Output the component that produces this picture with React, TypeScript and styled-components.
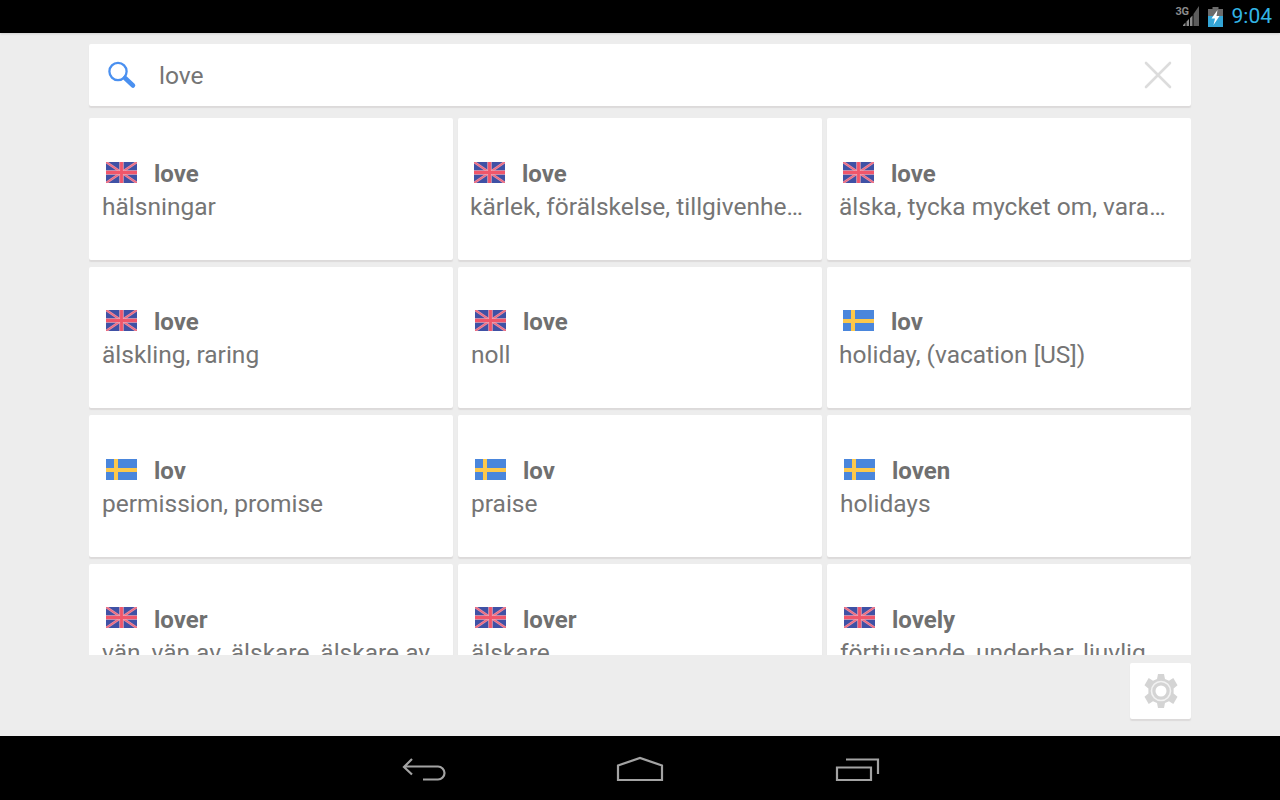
import styled, { createGlobalStyle } from "styled-components";

const GlobalStyle = createGlobalStyle`
  html, body {
    margin: 0;
    padding: 0;
    background: #ededed;
    font-family: Roboto, "Liberation Sans", sans-serif;
  }
`;

const Screen = styled.div`
  width: 1280px;
  height: 800px;
  display: flex;
  flex-direction: column;
  overflow: hidden;
  background: #ededed;
`;

const StatusBar = styled.div`
  height: 33px;
  flex: none;
  background: #000;
  display: flex;
  align-items: center;
  justify-content: flex-end;
  padding-right: 8px;
  box-shadow: 0 1px 2px rgba(0, 0, 0, 0.12);
`;

const SignalWrap = styled.div`
  position: relative;
  width: 24px;
  height: 24px;
  margin-right: 8px;
  margin-top: 1px;
`;

const NetworkLabel = styled.span`
  position: absolute;
  left: 0;
  top: 2px;
  font-size: 11px;
  line-height: 10px;
  font-weight: 700;
  letter-spacing: -0.3px;
  color: #8c8c8c;
`;

const Clock = styled.span`
  font-size: 21px;
  line-height: 33px;
  color: #33b5e5;
  margin-left: 9px;
`;

const Main = styled.div`
  flex: 1;
  display: flex;
  flex-direction: column;
  padding: 11px 89px 0;
  min-height: 0;
`;

const SearchBar = styled.div`
  height: 62px;
  flex: none;
  background: #fff;
  border-radius: 2px;
  box-shadow: 0 2px 1px #dcdada;
  display: flex;
  align-items: center;
  padding: 0 18px;
  margin-bottom: 12px;
`;

const SearchText = styled.span`
  flex: 1;
  margin-left: 22px;
  font-size: 24.6px;
  color: #757575;
`;

const Results = styled.div`
  height: 537px;
  flex: none;
  overflow: hidden;
  display: grid;
  grid-template-columns: repeat(3, 364px);
  grid-auto-rows: 141.5px;
  column-gap: 5px;
  row-gap: 7px;
`;

const Card = styled.div<{ $top: number; $left: number; $right: number }>`
  background: #fff;
  border-radius: 2px;
  box-shadow: 0 2px 1px #dcdada;
  padding: ${(p) => p.$top}px ${(p) => p.$right}px 0 ${(p) => p.$left}px;
  box-sizing: border-box;
  min-width: 0;
`;

const TitleRow = styled.div`
  display: flex;
  align-items: center;
  height: 30px;
  padding-left: 4px;
`;

const FlagSlot = styled.div`
  display: flex;
  flex: none;
  margin-bottom: 4px;
`;

const Word = styled.span`
  font-size: 24px;
  font-weight: 700;
  color: #707070;
  margin-left: 17px;
`;

const Translation = styled.div`
  font-size: 24.5px;
  line-height: 34px;
  padding-top: 1px;
  color: #757575;
  white-space: nowrap;
  overflow: hidden;
  text-overflow: ellipsis;
  padding-right: 2px;
`;

const Footer = styled.div`
  display: flex;
  justify-content: flex-end;
  padding-top: 8px;
`;

const SettingsButton = styled.div`
  width: 61px;
  height: 56px;
  background: #fff;
  border-radius: 2px;
  box-shadow: 0 2px 1px #dcdada;
  display: flex;
  align-items: center;
  justify-content: center;
`;

const NavBar = styled.div`
  height: 64px;
  flex: none;
  background: #000;
  display: flex;
  align-items: center;
  justify-content: center;
  gap: 170px;
`;

const UkFlag = () => (
  <svg width="31" height="21" viewBox="0 0 31 21">
    <rect width="31" height="21" fill="#3f51a5" />
    <path d="M0 0L31 21M31 0L0 21" stroke="#e98ba0" strokeWidth="2.600" />
    <path d="M0 0L31 21M31 0L0 21" stroke="#ef5a6e" strokeWidth="0.800" />
    <path d="M15.500 0V21M0 10.500H31" stroke="#eea3b2" strokeWidth="4.400" />
    <path d="M15.500 0V21M0 10.500H31" stroke="#f0566a" strokeWidth="2.800" />
  </svg>
);

const SeFlag = () => (
  <svg width="31" height="21" viewBox="0 0 31 21">
    <rect width="31" height="21" fill="#4a86dc" />
    <rect x="8" width="4" height="21" fill="#fdc84a" />
    <rect y="9" width="31" height="4" fill="#fdc84a" />
  </svg>
);

// top, left and right are the card's own padding, the rows sit a pixel off in places
const items = [
  { flag: "uk", word: "love", text: "hälsningar", top: 41, left: 13, right: 13 },
  { flag: "uk", word: "love", text: "kärlek, förälskelse, tillgivenhet, ömhet", top: 41, left: 12, right: 13 },
  { flag: "uk", word: "love", text: "älska, tycka mycket om, vara förtjust i", top: 41, left: 12, right: 20 },
  { flag: "uk", word: "love", text: "älskling, raring", top: 40.5, left: 13, right: 13 },
  { flag: "uk", word: "love", text: "noll", top: 40.5, left: 13, right: 13 },
  { flag: "se", word: "lov", text: "holiday, (vacation [US])", top: 40.5, left: 12, right: 13 },
  { flag: "se", word: "lov", text: "permission, promise", top: 41, left: 13, right: 13 },
  { flag: "se", word: "lov", text: "praise", top: 41, left: 13, right: 13 },
  { flag: "se", word: "loven", text: "holidays", top: 41, left: 13, right: 13 },
  { flag: "uk", word: "lover", text: "vän, vän av, älskare, älskare av", top: 41, left: 13, right: 13 },
  { flag: "uk", word: "lover", text: "älskare", top: 41, left: 13, right: 13 },
  { flag: "uk", word: "lovely", text: "förtjusande, underbar, ljuvlig, söt", top: 41, left: 13, right: 13 },
];

export default function App() {
  return (
    <Screen>
      <GlobalStyle />
      <StatusBar>
        <SignalWrap>
          <NetworkLabel>3G</NetworkLabel>
          <svg width="24" height="24" viewBox="0 0 24 24">
            <path d="M7 21h2.500v-3.500L7 20zM10.500 21H13v-7l-2.500 2.500zM14 21h2.500v-10.500L14 13z" fill="#8c8c8c" />
            <path d="M17.500 21H23V1l-5.500 8z" fill="#5c5c5c" />
          </svg>
        </SignalWrap>
        <svg width="15" height="20" viewBox="0 0 15 20">
          <path d="M4.500 0h6v2H15v8H0V2h4.500z" fill="#6b6b6b" />
          <rect y="9" width="15" height="11" fill="#33a5d6" />
          <path d="M9.500 3L3.500 11.500H7L5.500 18l6-9H8.500z" fill="#fff" />
        </svg>
        <Clock>9:04</Clock>
      </StatusBar>
      <Main>
        <SearchBar>
          <svg width="30" height="30" viewBox="0 0 30 30">
            <circle cx="11" cy="11.500" r="8.600" fill="none" stroke="#4a90f0" strokeWidth="2.300" />
            <path d="M18 18l8 7.500" stroke="#4a90f0" strokeWidth="4.500" strokeLinecap="round" />
          </svg>
          <SearchText>love</SearchText>
          <svg width="30" height="30" viewBox="0 0 30 30">
            <path d="M3 3l24 24M27 3L3 27" stroke="#dcdcdc" strokeWidth="2.600" strokeLinecap="round" />
          </svg>
        </SearchBar>
        <Results>
          {items.map(({ flag, word, text, top, left, right }, i) => (
            <Card key={i} $top={top} $left={left} $right={right}>
              <TitleRow>
                <FlagSlot>{flag === "uk" ? <UkFlag /> : <SeFlag />}</FlagSlot>
                <Word>{word}</Word>
              </TitleRow>
              <Translation>{text}</Translation>
            </Card>
          ))}
        </Results>
        <Footer>
          <SettingsButton>
            <svg width="36" height="36" viewBox="0 0 36 36">
              <path
                d="M15 1h6l1 5 4 1.700 4.300-2.700 4.200 7.300-3.900 3.300v4.800l3.900 3.300-4.200 7.300-4.300-2.700-4 1.700-1 5h-6l-1-5-4-1.700-4.300 2.700L1.500 23.700l3.900-3.300v-4.800l-3.900-3.300L5.700 5 10 7.700 14 6z"
                fill="#d4d4d4"
              />
              <circle cx="18" cy="18" r="9.500" fill="none" stroke="#f2f2f2" strokeWidth="1.600" />
              <circle cx="18" cy="18" r="5.500" fill="#fff" />
            </svg>
          </SettingsButton>
        </Footer>
      </Main>
      <NavBar>
        <svg width="46" height="30" viewBox="0 0 46 30">
          <path d="M12 6L4 14l8 7.500M4 13.500h34a6.500 6.500 0 0 1 0 13H23" fill="none" stroke="#a3a3a3" strokeWidth="2.200" />
        </svg>
        <svg width="48" height="30" viewBox="0 0 48 30">
          <path d="M2 27V12.500L24 5l22 7.500V27z" fill="none" stroke="#a3a3a3" strokeWidth="2.200" />
        </svg>
        <svg width="46" height="30" viewBox="0 0 46 30">
          <path d="M3 14.500h34V27H3zM12 6.500h32V21" fill="none" stroke="#a3a3a3" strokeWidth="2.200" />
        </svg>
      </NavBar>
    </Screen>
  );
}
